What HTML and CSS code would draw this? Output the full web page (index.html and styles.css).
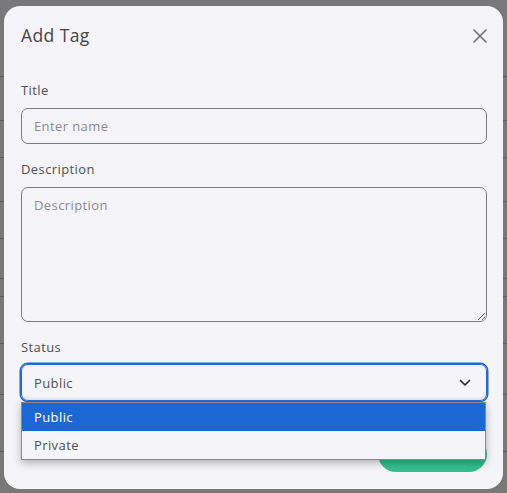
FILE: index.html
```html
<!DOCTYPE html>
<html lang="en">
<head>
<meta charset="utf-8">
<title>Add Tag</title>
<link rel="stylesheet" href="styles.css">
</head>
<body>
<div class="page">
  <div class="row r1"></div>
  <div class="row r2"></div>
  <div class="row r3"></div>
  <div class="row r4"></div>
  <div class="row r5"></div>
  <div class="row r6"></div>
  <div class="row r7"></div>
  <div class="row r8"></div>
  <div class="row r9"></div>
  <div class="row r10"></div>
</div>
<div class="overlay">
  <div class="modal">
    <div class="modal-header">
      <h2 class="modal-title">Add Tag</h2>
      <button class="close" aria-label="Close">
        <svg width="14" height="14" viewBox="0 0 14 14"><path d="M1 1L13 13M13 1L1 13" stroke="#6f6f73" stroke-width="1.6" stroke-linecap="round" fill="none"/></svg>
      </button>
    </div>
    <div class="modal-body">
      <div class="field">
        <label class="label">Title</label>
        <div class="input placeholder">Enter name</div>
      </div>
      <div class="field">
        <label class="label">Description</label>
        <textarea class="textarea" placeholder="Description"></textarea>
      </div>
      <div class="field">
        <label class="label">Status</label>
        <div class="select-wrap">
          <div class="select">
            <span>Public</span>
            <svg width="12" height="8" viewBox="0 0 12 8"><path d="M1.5 1.5L6 6L10.5 1.5" stroke="#2e2e32" stroke-width="1.7" fill="none" stroke-linecap="round" stroke-linejoin="round"/></svg>
          </div>
          <ul class="options">
            <li class="option active">Public</li>
            <li class="option">Private</li>
          </ul>
        </div>
      </div>
    </div>
    <div class="modal-footer">
      <button class="save">Save</button>
    </div>
  </div>
</div>
</body>
</html>
```

FILE: styles.css
```css
* { box-sizing: border-box; }
html, body { margin: 0; padding: 0; }
body {
  width: 507px;
  height: 493px;
  overflow: hidden;
  background: #ffffff;
  font-family: "Open Sans", "Noto Sans", sans-serif;
  position: relative;
}
.page { padding-top: 76px; }
.row { border-top: 1px solid #c9c9cf; }
.r1 { height: 44px; }
.r2 { height: 37px; }
.r3 { height: 44px; }
.r4 { height: 37px; }
.r5 { height: 40px; }
.r6 { height: 18px; }
.r7 { height: 47px; }
.r8 { height: 51px; }
.r9 { height: 57px; }
.r10 { height: 35px; }

.overlay {
  position: absolute;
  inset: 0;
  background: rgba(0, 0, 0, 0.53);
  padding: 6px 4px 4px 4px;
}
.modal {
  width: 499px;
  height: 483px;
  background: #f5f4f8;
  border-radius: 16px;
  display: flex;
  flex-direction: column;
}
.modal-header {
  display: flex;
  justify-content: space-between;
  padding: 17px 15px 0 17px;
  height: 74px;
  align-items: flex-start;
}
.modal-title {
  margin: 0;
  font-size: 17.5px;
  font-weight: 500;
  line-height: 24px;
  color: #45454a;
  letter-spacing: 0.4px;
}
.close {
  border: 0;
  background: none;
  padding: 0;
  width: 16px;
  height: 16px;
  margin-top: 5px;
  display: flex;
  align-items: center;
  justify-content: center;
}
.modal-body {
  padding: 0 16px 0 17px;
  display: flex;
  flex-direction: column;
  gap: 15px;
}
.field { display: flex; flex-direction: column; }
.label {
  font-size: 13px;
  font-weight: 500;
  line-height: 20px;
  color: #505055;
  margin-bottom: 8px;
  letter-spacing: 0.4px;
}
.input {
  height: 36px;
  border: 1px solid #7c7c80;
  border-radius: 7px;
  padding: 0 12px;
  display: flex;
  align-items: center;
  font-size: 13px;
  letter-spacing: 0.4px;
}
.placeholder { color: #8b8b90; }
.textarea {
  display: block;
  width: 100%;
  height: 135px;
  border: 1px solid #7c7c80;
  border-radius: 7px;
  background: transparent;
  padding: 8px 12px;
  font-family: inherit;
  font-size: 13px;
  letter-spacing: 0.4px;
  color: #333;
  margin: 0;
  resize: vertical;
}
.textarea::placeholder { color: #8b8b90; }
.select-wrap { position: relative; }
.select {
  height: 37px;
  margin-top: -1px;
  border: 1px solid #2a6fd0;
  box-shadow: 0 0 0 1.5px #2166cc, inset 0 -2px 3px rgba(0,0,0,0.06);
  border-radius: 7px;
  padding: 0 15px 0 12px;
  display: flex;
  align-items: center;
  justify-content: space-between;
  font-size: 13px;
  color: #505055;
  letter-spacing: 0.4px;
}
.options {
  position: absolute;
  left: 0;
  right: 1px;
  top: 37px;
  margin: 0;
  padding: 0;
  list-style: none;
  background: #f5f4f8;
  border: 1px solid #8a8a8e;
  box-shadow: 0 3px 8px rgba(0,0,0,0.28);
  z-index: 2;
}
.option {
  height: 28px;
  display: flex;
  align-items: center;
  padding-left: 12px;
  font-size: 13px;
  color: #505055;
  letter-spacing: 0.4px;
}
.option.active {
  height: 28px;
  background: #1b67d3;
  color: #ffffff;
  font-weight: 500;
}
.modal-footer {
  margin-top: auto;
  display: flex;
  justify-content: flex-end;
  padding: 0 16px 17px 17px;
}
.save {
  width: 109px;
  height: 36px;
  border: 0;
  border-radius: 18px;
  background: #34c08c;
  color: #fff;
  font-family: inherit;
  font-size: 13px;
  font-weight: 600;
}
```
